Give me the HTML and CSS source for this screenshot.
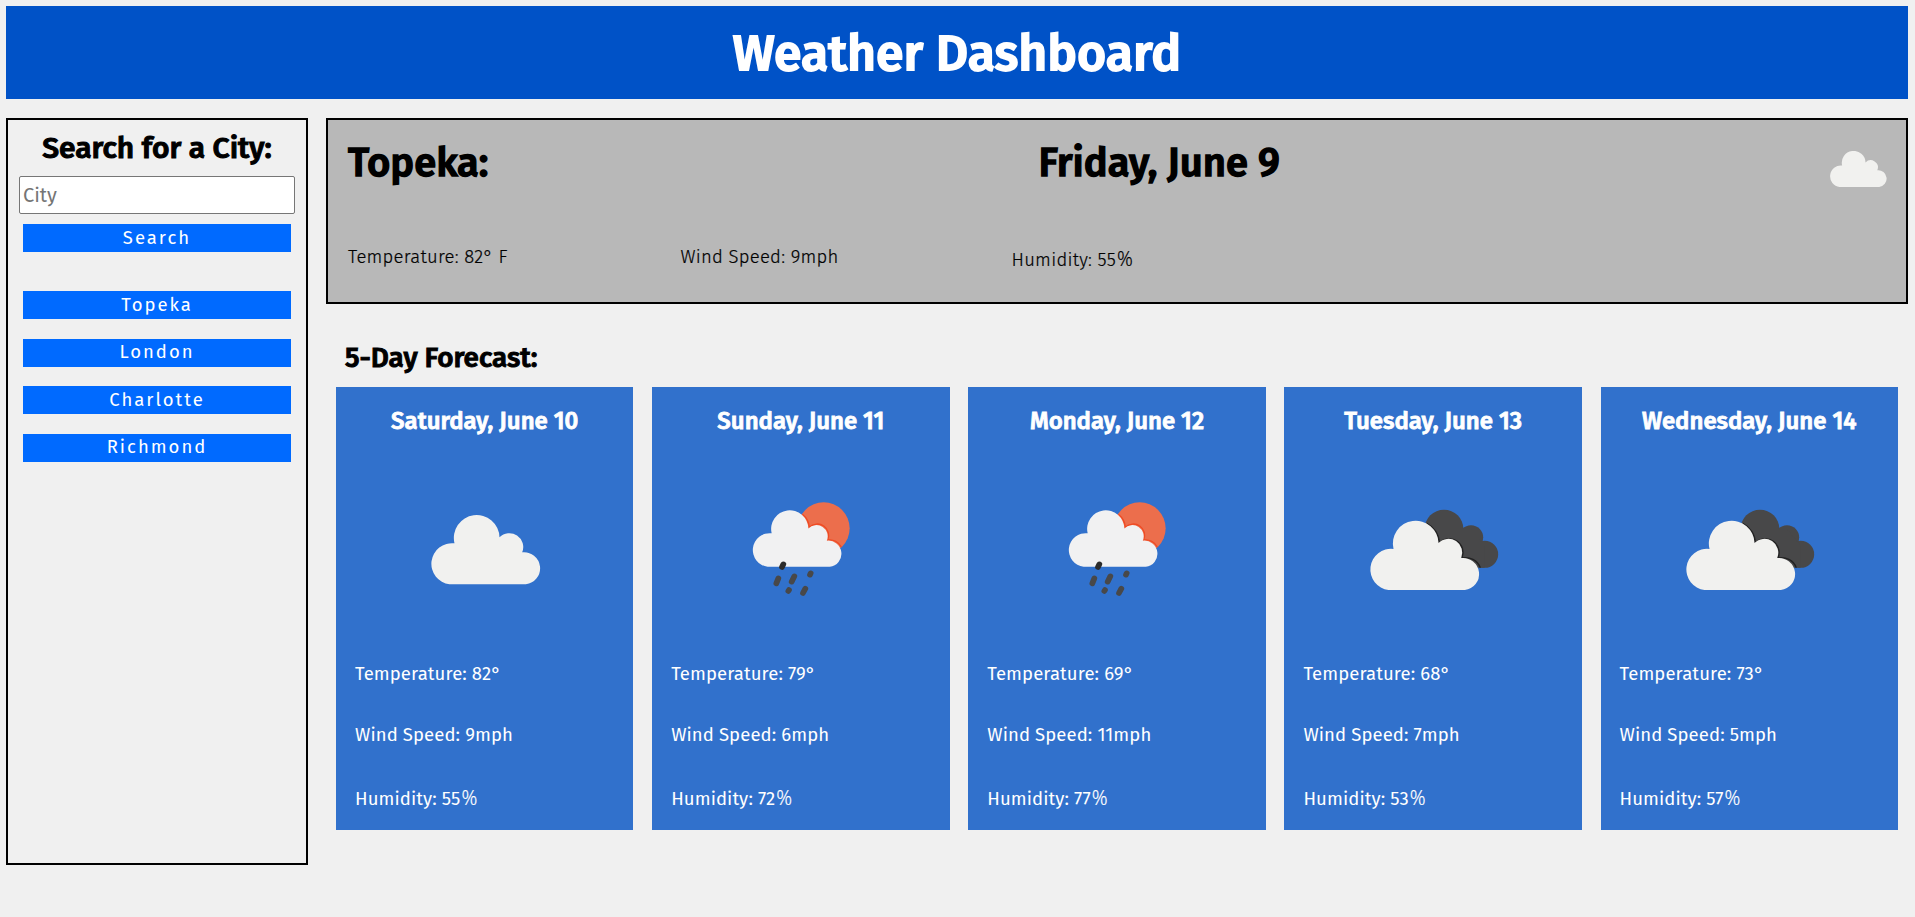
FILE: index.html
```html
<!DOCTYPE html>
<html lang="en">
<head>
<meta charset="utf-8">
<title>Weather Dashboard</title>
<link rel="stylesheet" href="styles.css">
</head>
<body>
<svg class="defs" aria-hidden="true">
  <symbol id="cloud" viewBox="332 406 329 207" overflow="visible">
    <path d="M387 613A61.5 61.5 0 0 1 402 490A68.5 68.5 0 1 1 537 472A41.5 41.5 0 0 1 605 517A48 48 0 0 1 616 613Z"/>
  </symbol>
  <symbol id="mostly-cloudy" viewBox="189 237 540 540">
    <g fill="#484849"><circle cx="492" cy="447" r="58"/><circle cx="573" cy="472" r="36.500"/><circle cx="614" cy="523" r="40.500"/><path d="M460 447h113l41 50v66h-80z"/></g>
    <g stroke="#222" stroke-width="4"><path d="M440 430A68.500 68.500 0 0 1 478 489A41.500 41.500 0 0 1 546 534A48 48 0 0 1 601 563" fill="none"/></g>
    <use href="#cloud" x="269" y="423" width="332" height="207" fill="#f1f1ef"/>
  </symbol>
  <symbol id="rain" viewBox="-57 -93 540 540">
    <circle cx="281" cy="115" r="78" fill="#ec6e4c"/>
    <path d="M217 73A56 56 0 0 1 238 112A34 34 0 0 1 293 150A39 39 0 0 1 334 171" fill="none" stroke="#f04a23" stroke-width="4"/>
    <use href="#cloud" x="68" y="61" width="268" height="170" fill="#f1f1f2"/>
    <g stroke="#484849" stroke-width="17" stroke-linecap="round"><path d="M145 265l-6 15M193 259l-8 16M242 250l-2 4M177 300l-2 3M226 296l-7 13"/><path stroke="#2b2b2b" d="M160 223l-4 8"/></g>
  </symbol>
</svg>

<header class="banner"><h1>Weather Dashboard</h1></header>

<div class="layout">
  <aside class="sidebar">
    <h2>Search for a City:</h2>
    <input class="city-input" type="text" placeholder="City">
    <button class="btn btn-search">Search</button>
    <div class="history">
      <button class="btn">Topeka</button>
      <button class="btn">London</button>
      <button class="btn">Charlotte</button>
      <button class="btn">Richmond</button>
    </div>
  </aside>

  <main class="content">
    <section class="current">
      <div class="current-top">
        <h2>Topeka:</h2>
        <h2>Friday, June 9</h2>
        <svg class="current-icon" fill="#f1f1ef"><use href="#cloud" width="57" height="36"/></svg>
      </div>
      <div class="current-stats">
        <p>Temperature: 82° F</p>
        <p>Wind Speed: 9mph</p>
        <p class="current-humidity">Humidity: 55<span class="pct">%</span></p>
      </div>
    </section>

    <h3 class="forecast-title">5-Day Forecast:</h3>
    <section class="forecast">
      <article class="card">
        <h4>Saturday, June 10</h4>
        <svg class="icon" viewBox="223.500 237 540 540" fill="#f1f1ef"><use href="#cloud" x="332" y="406" width="329" height="207"/></svg>
        <p>Temperature: 82°</p><p>Wind Speed: 9mph</p><p>Humidity: 55<span class="pct">%</span></p>
      </article>
      <article class="card">
        <h4>Sunday, June 11</h4>
        <svg class="icon"><use href="#rain"/></svg>
        <p>Temperature: 79°</p><p>Wind Speed: 6mph</p><p>Humidity: 72<span class="pct">%</span></p>
      </article>
      <article class="card">
        <h4>Monday, June 12</h4>
        <svg class="icon"><use href="#rain"/></svg>
        <p>Temperature: 69°</p><p>Wind Speed: 11mph</p><p>Humidity: 77<span class="pct">%</span></p>
      </article>
      <article class="card">
        <h4>Tuesday, June 13</h4>
        <svg class="icon"><use href="#mostly-cloudy"/></svg>
        <p>Temperature: 68°</p><p>Wind Speed: 7mph</p><p>Humidity: 53<span class="pct">%</span></p>
      </article>
      <article class="card">
        <h4>Wednesday, June 14</h4>
        <svg class="icon"><use href="#mostly-cloudy"/></svg>
        <p>Temperature: 73°</p><p>Wind Speed: 5mph</p><p>Humidity: 57<span class="pct">%</span></p>
      </article>
    </section>
  </main>
</div>
</body>
</html>
```

FILE: styles.css
```css
* { box-sizing: border-box; }
body {
  margin: 6px 7px 0 6px;
  background: #f0f0f0;
  color: #000;
  font-family: "Fira Sans", "Noto Sans", sans-serif;
}
h1, h2, h3, h4, p { margin: 0; }
h1, h2, h3, h4 {
  font-weight: 500;
  -webkit-text-stroke: 0.036em currentColor;
}
.defs { display: block; width: 0; height: 0; }

.banner {
  height: 93px;
  background: #0052c7;
  color: #fff;
  text-align: center;
}
.banner h1 {
  font-size: 50px;
  line-height: 95px;
}

.layout {
  display: flex;
  gap: 18px;
  margin-top: 19px;
}
.sidebar {
  width: 302px;
  height: 747px;
  padding: 7px 11px 0;
  border: 2px solid #000;
  text-align: center;
}
.sidebar h2 {
  font-size: 30px;
  line-height: 42px;
}
.city-input {
  display: block;
  width: 276px;
  height: 38px;
  margin: 7px 0 10px;
  padding: 1px 3px;
  border: 1px solid #767676;
  border-radius: 2px;
  background: #fff;
  font: 20px "Fira Sans", "Noto Sans", sans-serif;
}
.city-input::placeholder { color: #757575; }
.btn {
  display: block;
  width: 268px;
  height: 28px;
  margin: 0 4px;
  padding: 0;
  border: 0;
  background: #006aff;
  color: #fff;
  font: 18.5px/27px "Fira Sans", "Noto Sans", sans-serif;
  letter-spacing: 2px;
}
.history {
  display: grid;
  gap: 19.67px;
  margin-top: 39px;
}

.content { flex: 1; }
.current {
  height: 186px;
  padding: 19px 19px 0 20px;
  border: 2px solid #000;
  background: #b8b8b8;
}
.current-top {
  display: flex;
  justify-content: space-between;
  height: 104px;
}
.current-top h2 {
  font-size: 40px;
  line-height: 49px;
}
.current-icon {
  width: 57px;
  height: 36px;
  margin-top: 12px;
}
.current-stats {
  display: grid;
  grid-template-columns: 332.500px 331px 1fr;
  font-size: 18.5px;
  font-weight: 300;
  line-height: 28px;
  letter-spacing: 0.25px;
  -webkit-text-stroke: 0.2px #000;
}
.current-humidity { padding-top: 3px; }
.pct {
  margin-left: 1px;
  font-family: "Noto Sans", sans-serif;
  font-size: 19.5px;
  font-weight: 300;
  line-height: 1;
  -webkit-text-stroke: 0.2px currentColor;
}

.forecast-title {
  margin: 36px 0 0 19px;
  font-size: 27.9px;
  line-height: 36px;
}
.forecast {
  display: grid;
  grid-template-columns: repeat(5, 1fr);
  gap: 18.700px;
  margin: 11px 10px 0;
}
.card {
  height: 443px;
  padding: 18px 19px 0;
  background: #3171cc;
  color: #fff;
  font-size: 18.5px;
  line-height: 28px;
  letter-spacing: 0.1px;
}
.card h4 {
  font-size: 24px;
  line-height: 32px;
  letter-spacing: 0;
  text-align: center;
}
.icon {
  display: block;
  width: 180px;
  height: 180px;
  margin: 22px auto 21px;
}
.card p { margin-bottom: 33px; }
.card p:last-child { margin-top: 36px; margin-bottom: 0; }
```
